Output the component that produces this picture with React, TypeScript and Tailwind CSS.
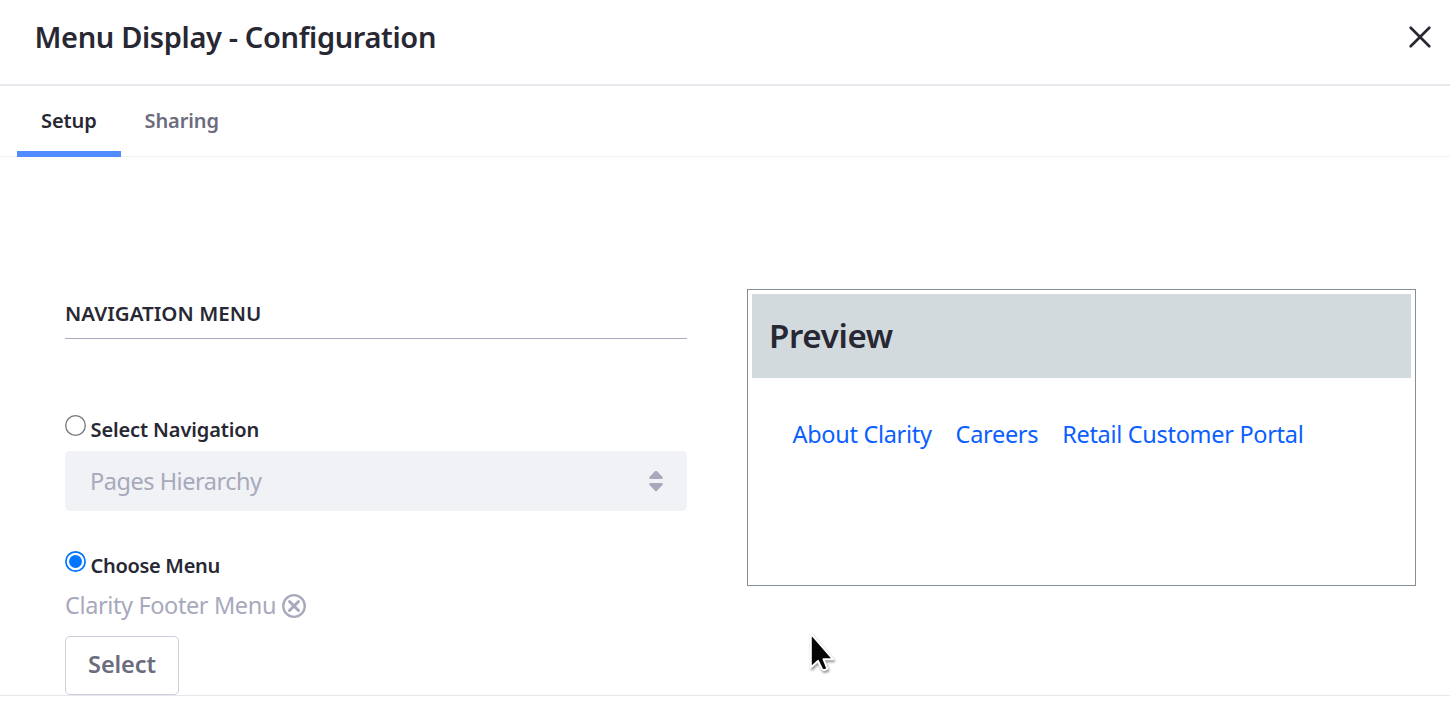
import React from "react";

function RadioDot({ checked }: { checked?: boolean }) {
  return (
    <svg width="21" height="21" viewBox="0 0 21 21" className="block shrink-0">
      {checked ? (
        <>
          <circle cx="10.5" cy="10.5" r="9.6" fill="#fff" stroke="#0075ff" strokeWidth="1.7" />
          <circle cx="10.5" cy="10.5" r="6.5" fill="#0075ff" />
        </>
      ) : (
        <circle cx="10.5" cy="10.5" r="9.8" fill="#fff" stroke="#767676" strokeWidth="1.3" />
      )}
    </svg>
  );
}

export default function App() {
  return (
    <div className="relative flex h-[707px] w-full flex-col overflow-hidden bg-white font-['Noto_Sans','Open_Sans',sans-serif] whitespace-nowrap text-[#272833]">
      <header className="flex h-[86px] shrink-0 items-start justify-between border-b-2 border-[#e7e7ed] pr-[18px] pl-[34.5px]">
        <h1 className="mt-[15px] text-[29px] leading-[44px] font-semibold tracking-[-0.36px]">Menu Display - Configuration</h1>
        <button aria-label="Close" className="mt-[25px]">
          <svg width="24" height="24" viewBox="0 0 24 24" className="block" fill="none" stroke="#272833" strokeWidth="2.7" strokeLinecap="round">
            <path d="M2.7 2.7 21.3 21.3M21.3 2.7 2.7 21.3" />
          </svg>
        </button>
      </header>
      <nav className="flex h-[71px] shrink-0 border-b border-[#f1f2f5] pl-[17px] text-[20px] leading-[30px] font-semibold tracking-[-0.1px]">
        <button className="mb-[-1px] flex w-[104px] items-start border-b-[6px] border-[#528bff] pt-5 pl-6">Setup</button>
        <button className="flex items-start pt-5 pl-[23.5px] text-[#6b6c7e]">Sharing</button>
      </nav>
      <main className="flex h-[539px] shrink-0 items-start border-b border-[#e7e7ed] pl-[65px]">
        <section className="w-[622px]">
          <h2 className="mt-[142px] h-[40px] border-b border-[#a7a9bc] text-[20.5px] leading-[28px] font-semibold tracking-[0.02px]">NAVIGATION MENU</h2>
          <label className="mt-[76px] flex h-[30px] gap-[4.5px] text-[20px] leading-[30px] font-semibold tracking-[-0.12px]">
            <RadioDot />
            <span>Select Navigation</span>
          </label>
          <div className="mt-[6px] flex h-[60px] items-center justify-between rounded-[5px] bg-[#f1f2f5] pr-[24px] pl-[25px] text-[23.5px] tracking-[-0.47px] text-[#a7a9bc]">
            <span className="pt-px">Pages Hierarchy</span>
            <svg width="14" height="22" viewBox="0 0 14 22" fill="#a7a9bc">
              <path d="M6 1.2Q7 .2 8 1.2L13.5 7Q14.3 8.8 12.6 9H1.4Q-.3 8.8.5 7ZM6 20.8Q7 21.8 8 20.8L13.5 15Q14.3 13.2 12.6 13H1.4Q-.3 13.2.5 15Z" />
            </svg>
          </div>
          <label className="mt-[40px] flex h-[30px] gap-[4.5px] text-[20px] leading-[30px] font-semibold tracking-[-0.3px]">
            <RadioDot checked />
            <span>Choose Menu</span>
          </label>
          <div className="mt-[7px] flex h-[36px] items-center gap-[6px] text-[23.5px] leading-[36px] tracking-[-0.38px] text-[#a7a9bc]">
            <span className="-mt-[2px]">Clarity Footer Menu</span>
            <svg width="24" height="24" viewBox="0 0 24 24" fill="none" stroke="#a7a9bc">
              <circle cx="12" cy="12" r="10.8" strokeWidth="2.3" />
              <path d="m7.5 7.5 9 9m0-9-9 9" strokeWidth="3" strokeLinecap="round" />
            </svg>
          </div>
          <button className="mt-[12px] flex h-[59px] w-[114px] items-center justify-center rounded-[5px] border border-[#cdced9] pb-px text-[23.5px] font-semibold tracking-[-0.1px] text-[#6b6c7e]">Select</button>
        </section>
        <section className="mt-[132px] ml-[60px] h-[297px] w-[669px] border border-[#868e96] p-1">
          <h2 className="h-[84px] bg-[#d3dadd] pl-[17px] text-[33px] leading-[84px] font-semibold tracking-[-0.3px]">Preview</h2>
          <div className="mt-[38px] flex gap-[24px] pl-[40.5px] text-[23.5px] leading-[36px] tracking-[-0.31px] text-[#0b5fff]">
            <a>About Clarity</a>
            <a>Careers</a>
            <a>Retail Customer Portal</a>
          </div>
        </section>
      </main>
      <svg width="32" height="44" viewBox="0 0 32 44" className="absolute top-[630px] left-[806px] drop-shadow-[1px_2px_1px_#0006]">
        <path d="M4.8 3.5V37.5l7.2-6.6 3.8 7.9q2.4 2.7 5.6-.2l-3.9-9.4h9.5Z" fill="#050505" stroke="#fff" strokeWidth="2" strokeLinejoin="round" />
      </svg>
    </div>
  );
}
